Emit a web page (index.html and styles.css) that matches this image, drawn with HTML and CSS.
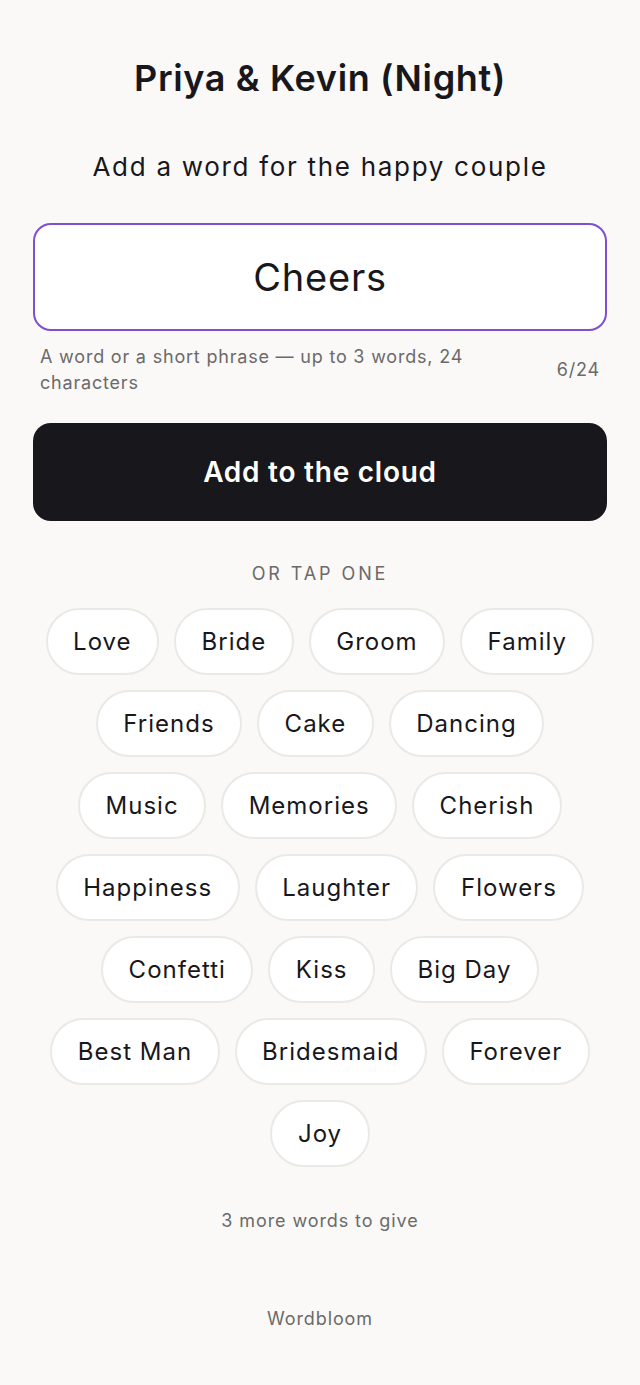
FILE: index.html
```html
<!DOCTYPE html>
<html lang="en">
<head>
<meta charset="utf-8">
<title>Priya &amp; Kevin (Night)</title>
<link rel="stylesheet" href="styles.css">
</head>
<body>
<main class="page">
  <h1 class="title">Priya &amp; Kevin (Night)</h1>
  <p class="subtitle">Add a word for the happy couple</p>
  <div class="input-box">Cheers</div>
  <div class="helper">
    <span class="helper-text">A word or a short phrase — up to 3 words, 24 characters</span>
    <span class="counter">6/24</span>
  </div>
  <button class="submit">Add to the cloud</button>
  <p class="or-tap">OR TAP ONE</p>
  <div class="chips">
    <span class="chip">Love</span>
    <span class="chip">Bride</span>
    <span class="chip">Groom</span>
    <span class="chip">Family</span>
    <span class="chip">Friends</span>
    <span class="chip">Cake</span>
    <span class="chip">Dancing</span>
    <span class="chip">Music</span>
    <span class="chip">Memories</span>
    <span class="chip">Cherish</span>
    <span class="chip">Happiness</span>
    <span class="chip">Laughter</span>
    <span class="chip">Flowers</span>
    <span class="chip">Confetti</span>
    <span class="chip">Kiss</span>
    <span class="chip">Big Day</span>
    <span class="chip">Best Man</span>
    <span class="chip">Bridesmaid</span>
    <span class="chip">Forever</span>
    <span class="chip">Joy</span>
  </div>
  <p class="remaining">3 more words to give</p>
  <footer class="brand">Wordbloom</footer>
</main>
</body>
</html>
```
FILE: styles.css
```css
html, body {
  margin: 0;
  padding: 0;
  background: #faf9f8;
}
body {
  font-family: Inter, "Noto Sans", sans-serif;
  color: #18171c;
}
.page {
  padding: 56px 33px 40px;
  display: flex;
  flex-direction: column;
  align-items: stretch;
}
.title {
  margin: 0;
  font-size: 36px;
  line-height: 44px;
  font-weight: 600;
  text-align: center;
  letter-spacing: 0.65px;
}
.subtitle {
  margin: 50px 0 0;
  font-size: 26px;
  line-height: 34px;
  font-weight: 400;
  text-align: center;
  letter-spacing: 1.7px;
}
.input-box {
  margin-top: 39px;
  height: 108px;
  box-sizing: border-box;
  border: 2px solid #7e4fd0;
  border-radius: 18px;
  background: #fff;
  display: flex;
  align-items: center;
  justify-content: center;
  font-size: 38px;
  letter-spacing: 0.8px;
}
.helper {
  margin-top: 13px;
  padding: 0 7px;
  display: flex;
  align-items: center;
  gap: 24px;
  color: #6b6a69;
  font-size: 18px;
  line-height: 26px;
  letter-spacing: 0.8px;
}
.helper-text {
  flex: 1;
  max-width: 470px;
}
.counter {
  margin-left: auto;
}
.submit {
  margin-top: 27px;
  height: 98px;
  border: 0;
  border-radius: 18px;
  background: #18171c;
  color: #fff;
  font-family: inherit;
  font-size: 28px;
  font-weight: 600;
  letter-spacing: 0.75px;
}
.or-tap {
  margin: 41px 0 0;
  text-align: center;
  font-size: 18px;
  line-height: 24px;
  letter-spacing: 2.9px;
  color: #6b6a69;
}
.chips {
  margin-top: 22px;
  display: flex;
  flex-wrap: wrap;
  justify-content: center;
  gap: 15px 15px;
  padding: 0 4px;
}
.chip {
  box-sizing: border-box;
  height: 67px;
  padding: 0 25.5px;
  display: flex;
  align-items: center;
  background: #fff;
  border: 2px solid #ebe9e6;
  border-radius: 999px;
  font-size: 24px;
  letter-spacing: 1px;
}
.remaining {
  margin: 42px 0 0;
  text-align: center;
  font-size: 18px;
  line-height: 24px;
  letter-spacing: 0.9px;
  color: #6b6a69;
}
.brand {
  margin-top: 74px;
  text-align: center;
  font-size: 18px;
  line-height: 24px;
  letter-spacing: 0.9px;
  color: #6b6a69;
}
```
